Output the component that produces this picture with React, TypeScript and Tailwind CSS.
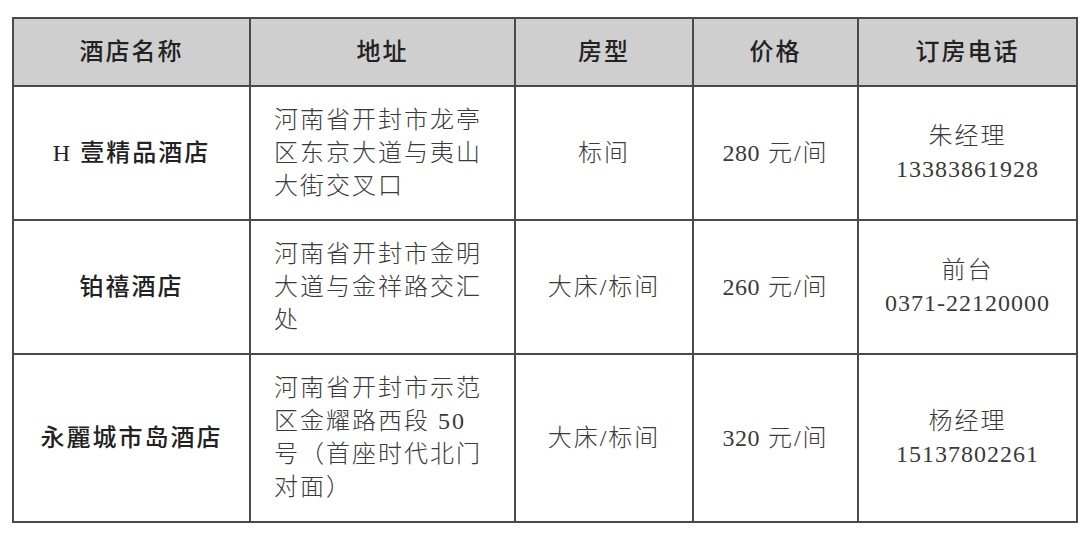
const rows = [
  {
    name: "H 壹精品酒店",
    address: ["河南省开封市龙亭", "区东京大道与夷山", "大街交叉口"],
    room: "标间",
    price: "280",
    contact: "朱经理",
    phone: "13383861928",
    h: "h-[134px]",
  },
  {
    name: "铂禧酒店",
    address: ["河南省开封市金明", "大道与金祥路交汇", "处"],
    room: "大床/标间",
    price: "260",
    contact: "前台",
    phone: "0371-22120000",
    h: "h-[134px]",
  },
  {
    name: "永麗城市岛酒店",
    address: ["河南省开封市示范", "区金耀路西段 50", "号（首座时代北门", "对面）"],
    room: "大床/标间",
    price: "320",
    contact: "杨经理",
    phone: "15137802261",
    h: "h-[168px]",
  },
];

const cell = "border-2 border-[#4a4a4a] p-0 align-middle";

export default function App() {
  return (
    <div className="w-[1080px] h-[536px] bg-white pt-[17px] pl-[12px] font-['Liberation_Serif','Noto_Sans_CJK_SC',serif] text-[24px] leading-[33px] tracking-[2px] text-[#3a3a3a]">
      <table className="border-collapse table-fixed w-[1064px]">
        <colgroup>
          <col className="w-[237px]" />
          <col className="w-[265px]" />
          <col className="w-[178px]" />
          <col className="w-[165px]" />
          <col className="w-[219px]" />
        </colgroup>
        <thead>
          <tr className="h-[68px] bg-[#d0cfcf] text-[#222]">
            {["酒店名称", "地址", "房型", "价格", "订房电话"].map((t) => (
              <th key={t} className={`${cell} text-center font-medium`}>
                {t}
              </th>
            ))}
          </tr>
        </thead>
        <tbody className="font-light">
          {rows.map((r) => (
            <tr key={r.name} className={r.h}>
              <td className={`${cell} text-center text-[#222] font-medium`}>{r.name}</td>
              <td className={`${cell} pl-[23px]`}>
                {r.address.map((l) => (
                  <div key={l} className="whitespace-nowrap">
                    {l}
                  </div>
                ))}
              </td>
              <td className={`${cell} text-center`}>{r.room}</td>
              <td className={`${cell} text-center`}>
                <span className="tracking-[0.5px]">{r.price}</span> 元/间
              </td>
              <td className={`${cell} text-center`}>
                <div>{r.contact}</div>
                <div className="tracking-[1px]">{r.phone}</div>
              </td>
            </tr>
          ))}
        </tbody>
      </table>
    </div>
  );
}
